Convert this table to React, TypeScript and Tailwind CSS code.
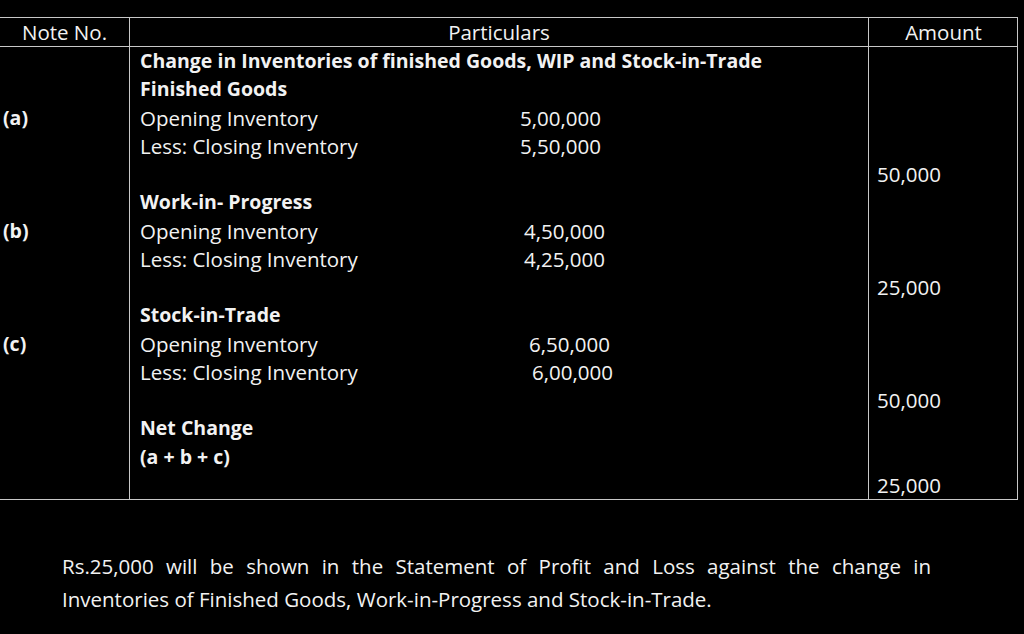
const font = { fontFamily: '"Open Sans", "Noto Sans", sans-serif' }

type Line = {
  note?: string
  text?: string
  bold?: boolean
  figure?: string
  figurePad?: string
  amount?: string
}

const lines: Line[] = [
  { text: 'Change in Inventories of finished Goods, WIP and Stock-in-Trade', bold: true },
  { text: 'Finished Goods', bold: true },
  { note: '(a)', text: 'Opening Inventory', figure: '5,00,000', figurePad: 'pl-[380px]' },
  { text: 'Less: Closing Inventory', figure: '5,50,000', figurePad: 'pl-[380px]' },
  { amount: '50,000' },
  { text: 'Work-in- Progress', bold: true },
  { note: '(b)', text: 'Opening Inventory', figure: '4,50,000', figurePad: 'pl-[384px]' },
  { text: 'Less: Closing Inventory', figure: '4,25,000', figurePad: 'pl-[384px]' },
  { amount: '25,000' },
  { text: 'Stock-in-Trade', bold: true },
  { note: '(c)', text: 'Opening Inventory', figure: '6,50,000', figurePad: 'pl-[389px]' },
  { text: 'Less: Closing Inventory', figure: '6,00,000', figurePad: 'pl-[392px]' },
  { amount: '50,000' },
  { text: 'Net Change', bold: true },
  { text: '(a + b + c)', bold: true },
  { amount: '25,000' },
]

function BodyLine({ line }: { line: Line }) {
  return (
    <div className="grid grid-cols-[129px_739px_150px] h-[28.25px] leading-[28px] items-center">
      <div className="pl-[3px] font-bold text-[19.5px]">{line.note}</div>
      <div className="relative border-l border-[#c8c8c8] h-full flex items-center pl-[10px]">
        <span className={line.bold ? 'font-bold text-[19.5px]' : ''}>{line.text}</span>
        {line.figure && (
          <span className={`absolute top-0 h-full flex items-center ${line.figurePad}`}>{line.figure}</span>
        )}
      </div>
      <div className="border-l border-[#c8c8c8] h-full flex items-center pl-[8px]">{line.amount}</div>
    </div>
  )
}

export default function App() {
  return (
    <div className="w-[1024px] h-[634px] bg-black text-[#f2f2f2] text-[20.5px] overflow-hidden pt-[17px]" style={font}>
      <div className="w-[1018px] border-t border-r border-b border-[#c8c8c8]">
        <div className="grid grid-cols-[129px_739px_150px] h-[29px] leading-[28px] items-center border-b border-[#c8c8c8]">
          <div className="text-center">Note No.</div>
          <div className="text-center border-l border-[#c8c8c8] h-full flex items-center justify-center">Particulars</div>
          <div className="text-center border-l border-[#c8c8c8] h-full flex items-center justify-center">Amount</div>
        </div>
        {lines.map((line, i) => (
          <BodyLine key={i} line={line} />
        ))}
      </div>
      <div className="mt-[50px] ml-[62px] w-[869px] leading-[33px]">
        <p className="text-justify [text-align-last:justify]">
          Rs.25,000 will be shown in the Statement of Profit and Loss against the change in
        </p>
        <p>Inventories of Finished Goods, Work-in-Progress and Stock-in-Trade.</p>
      </div>
    </div>
  )
}
